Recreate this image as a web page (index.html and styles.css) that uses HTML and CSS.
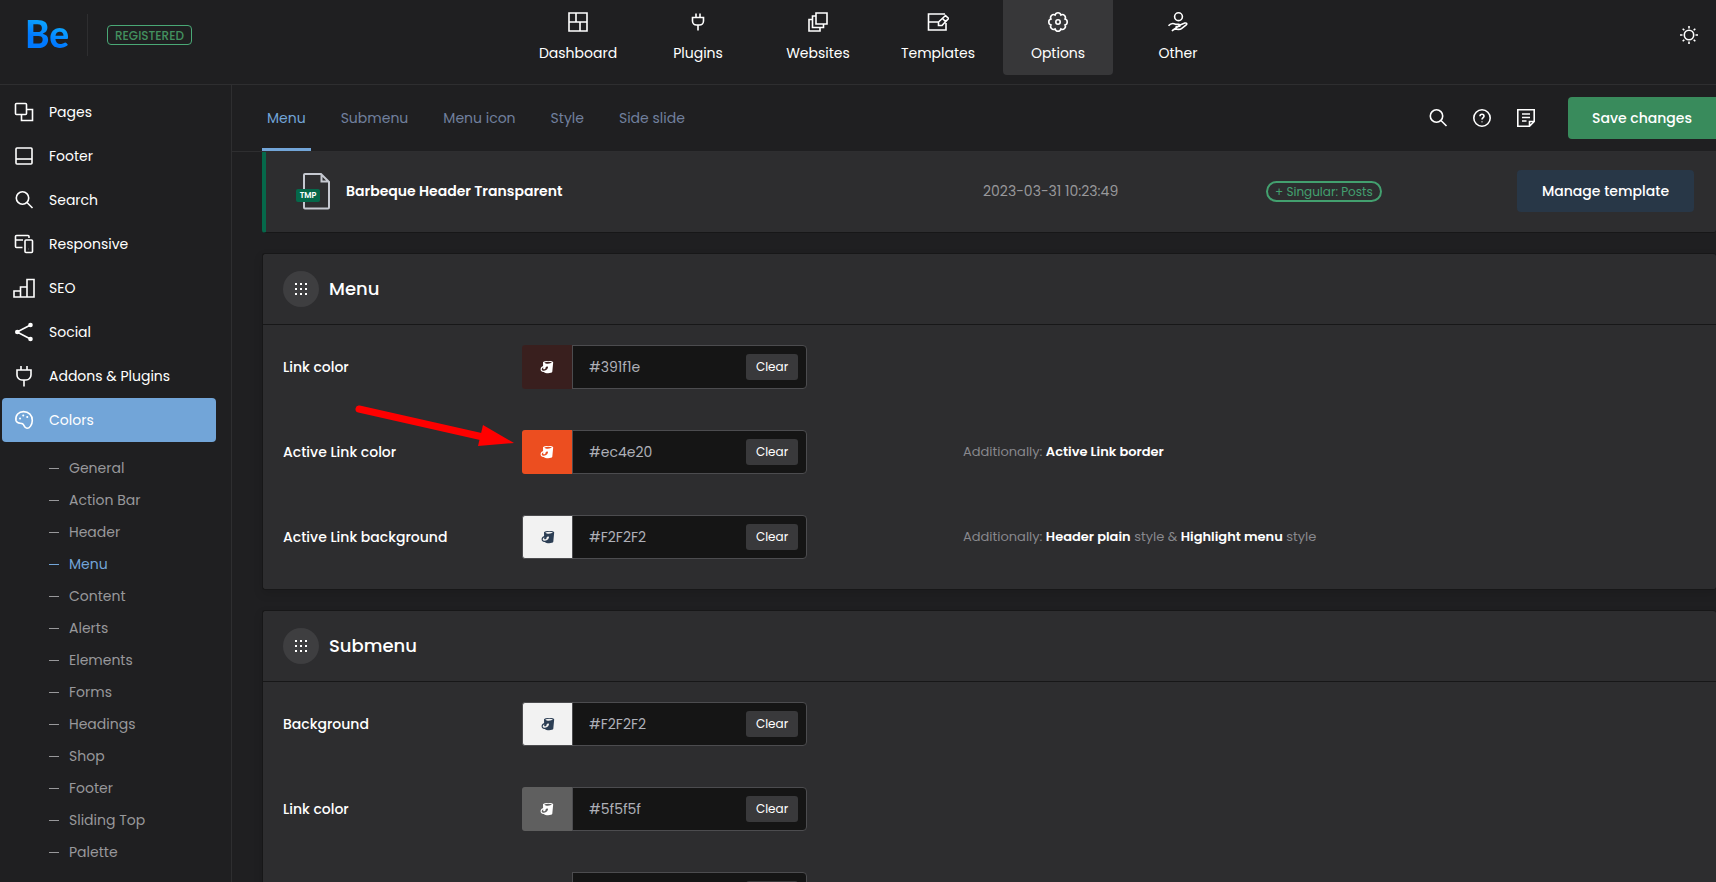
FILE: index.html
```html
<!DOCTYPE html>
<html lang="en">
<head>
<meta charset="utf-8">
<title>Theme Options</title>
<link rel="stylesheet" href="styles.css">
</head>
<body>
<svg class="sprite" aria-hidden="true">
  <symbol id="i-plug" viewBox="0 0 22 22"><path d="M8 4.500V1M14 4.500V1M4 5h14v5a5 5 0 0 1-5 5H9a5 5 0 0 1-5-5zM11 15v6.500"/></symbol>
  <symbol id="i-search" viewBox="0 0 22 22"><circle cx="9.500" cy="9" r="6.200"/><path d="M14 13.500l5.500 5.500"/></symbol>
  <symbol id="i-bucket" viewBox="0 0 14 14"><path fill-rule="evenodd" d="M3 2.300C3.500.6 12.900.4 13.200 2.200L12.300 11.800C11.800 13.700 5 13.700 3.800 12C1.800 12.200.2 10.700.6 8.700C.9 7.200 1.800 6.300 3.100 5.900ZM4.300 2.500C5.500 4.200 10.500 4.100 12 2.300C9.800 1.500 6.300 1.500 4.300 2.500ZM3.400 7.200C1.700 8 1.200 9.700 2.300 10.600C4.800 11 8 9.600 8 6.900C7.300 6.300 6 6.600 5.600 7.400C5.700 8.700 4.500 9.600 3.500 9.300C3 8.800 3.200 8 3.400 7.200Z"/></symbol>
  <symbol id="i-dots" viewBox="0 0 12 12"><path d="M0 0h2v2H0zM5 0h2v2H5zM10 0h2v2h-2zM0 5h2v2H0zM5 5h2v2H5zM10 5h2v2h-2zM0 10h2v2H0zM5 10h2v2H5zM10 10h2v2h-2z"/></symbol>
</svg>

<header class="topbar">
  <div class="brand">
    <a class="logo" href="#">Be</a>
    <span class="registered">REGISTERED</span>
  </div>
  <nav class="topnav" aria-label="Main">
    <a class="topnav-item" href="#"><svg class="icon" viewBox="0 0 22 22"><path d="M2 2h18v18H2zM2 11h18M9 2v9M13 11v9"/></svg>Dashboard</a>
    <a class="topnav-item" href="#"><svg class="icon" viewBox="0 0 22 22"><path d="M9 6V2.500M13 6V2.500M5.500 6.500h11V10a4 4 0 0 1-4 4h-3a4 4 0 0 1-4-4zM11 14v5.500"/></svg>Plugins</a>
    <a class="topnav-item" href="#"><svg class="icon" viewBox="0 0 22 22"><path d="M9 2h11v11H9zM9 5H5.500v11.500h11V13M5.500 8.500H2V20h11v-3.500"/></svg>Websites</a>
    <a class="topnav-item" href="#"><svg class="icon" viewBox="0 0 22 22"><path d="M18 3H1.500v16h17.500v-7M1.500 11H11M18.500 4.500l3 3-6.500 7h-3.500v-3.500zM15.500 7.500l3 3"/></svg>Templates</a>
    <a class="topnav-item is-active" href="#"><svg class="icon" viewBox="0 0 22 22"><path d="M18 8.100A3 3 0 0 1 18 13.900A3 3 0 0 1 13.900 18A3 3 0 0 1 8.100 18A3 3 0 0 1 4 13.900A3 3 0 0 1 4 8.100A3 3 0 0 1 8.100 4A3 3 0 0 1 13.900 4A3 3 0 0 1 18 8.100Z"/><circle cx="11" cy="11" r="2.200"/></svg>Options</a>
    <a class="topnav-item" href="#"><svg class="icon" viewBox="0 0 22 22"><circle cx="11.500" cy="5.700" r="3.900"/><path d="M1.500 14.800c2-2.400 4.500-2.800 7-1.600h3.300c1.800 0 1.800 2.300 0 2.300H8.500M12.500 14.300l5.300-2.200c1.900-.5 2.700.7 1.400 1.900l-4.700 3.600c-1.500 1.200-3.500.8-5.500.6-1.700-.2-3 .4-4 1.700z"/></svg>Other</a>
  </nav>
  <button class="icon-btn theme" type="button" aria-label="Switch theme"><svg class="icon" viewBox="0 0 22 22"><circle cx="11" cy="11" r="4.700"/><path d="M11 2v2.500M11 17.500V20M2 11h2.500M17.500 11H20M4.700 4.700l1.600 1.600M15.700 15.700l1.600 1.600M4.700 17.300l1.600-1.600M15.700 6.300l1.600-1.600"/></svg></button>
</header>

<div class="shell">
  <aside class="sidebar">
    <nav aria-label="Sections">
      <a class="side-item" href="#"><svg class="icon" viewBox="0 0 22 22"><rect x="2.500" y="2.500" width="11" height="11" rx="1"/><path d="M14 8.500h5.500v11h-11V14"/></svg>Pages</a>
      <a class="side-item" href="#"><svg class="icon" viewBox="0 0 22 22"><rect x="3" y="3" width="16" height="16" rx="1"/><path d="M3 14h16"/></svg>Footer</a>
      <a class="side-item" href="#"><svg class="icon"><use href="#i-search"/></svg>Search</a>
      <a class="side-item" href="#"><svg class="icon" viewBox="0 0 22 22"><path d="M9.500 14.500H3.500a1 1 0 0 1-1-1v-10a1 1 0 0 1 1-1h11.500a1 1 0 0 1 1 1V5M2.500 7H10"/><rect x="12" y="7" width="7.500" height="12.500" rx="1"/><path d="M15.700 16h.2"/></svg>Responsive</a>
      <a class="side-item" href="#"><svg class="icon" viewBox="0 0 22 22"><path d="M1 14h6.500v6H1zM7.500 10H14v10H7.500zM14 2.500h7V20h-7z"/></svg>SEO</a>
      <a class="side-item" href="#"><svg class="icon" viewBox="0 0 22 22"><path d="M17.500 4L4 11l13.500 7"/><g class="solid"><circle cx="17.500" cy="4" r="2.300"/><circle cx="4.300" cy="11" r="2.300"/><circle cx="17.500" cy="18" r="2.300"/></g></svg>Social</a>
      <a class="side-item" href="#"><svg class="icon"><use href="#i-plug"/></svg>Addons &amp; Plugins</a>
      <a class="side-item is-active" href="#"><svg class="icon" viewBox="0 0 22 22"><path d="M3 11.500C2 6 6 2.600 10.500 2.600C15.700 2.600 19.500 6.400 19.300 11.500C19.200 16 16.500 19.400 14 19.300C11 19 11.500 15.800 9.500 14.700C7.500 13.700 4 15 3 11.500Z"/><path class="thick" d="M7 9.500h.1M10.200 6.500h.1M14.200 8h.1"/></svg>Colors</a>
    </nav>
    <nav class="subnav" aria-label="Colors">
      <a class="subnav-item" href="#">General</a>
      <a class="subnav-item" href="#">Action Bar</a>
      <a class="subnav-item" href="#">Header</a>
      <a class="subnav-item is-active" href="#">Menu</a>
      <a class="subnav-item" href="#">Content</a>
      <a class="subnav-item" href="#">Alerts</a>
      <a class="subnav-item" href="#">Elements</a>
      <a class="subnav-item" href="#">Forms</a>
      <a class="subnav-item" href="#">Headings</a>
      <a class="subnav-item" href="#">Shop</a>
      <a class="subnav-item" href="#">Footer</a>
      <a class="subnav-item" href="#">Sliding Top</a>
      <a class="subnav-item" href="#">Palette</a>
    </nav>
  </aside>

  <main class="main">
    <div class="toolbar">
      <nav class="tabs" aria-label="Menu colors">
        <a class="tab is-active" href="#">Menu</a>
        <a class="tab" href="#">Submenu</a>
        <a class="tab" href="#">Menu icon</a>
        <a class="tab" href="#">Style</a>
        <a class="tab" href="#">Side slide</a>
      </nav>
      <div class="tools">
        <button class="icon-btn" type="button" aria-label="Search"><svg class="icon"><use href="#i-search"/></svg></button>
        <button class="icon-btn" type="button" aria-label="Help"><svg class="icon" viewBox="0 0 22 22"><circle cx="11" cy="11" r="8.200"/><path d="M9 9.200c0-2.600 4-2.600 4 0 0 1.400-2 1.500-2 3.300M11 14.500v.8"/></svg></button>
        <button class="icon-btn" type="button" aria-label="Notes"><svg class="icon" viewBox="0 0 22 22"><path d="M14.500 19.200H2.800V2.800h16.400v11.700zM14.500 19v-4.500H19M7 7h8M7 10.500h8M7 14h4.500"/></svg></button>
        <button class="save" type="button">Save changes</button>
      </div>
    </div>

    <div class="content">
      <article class="template">
        <svg class="file-icon" viewBox="0 0 36 38" aria-hidden="true">
          <path class="file-sheet" d="M9 2h16l8 8v25.500a1 1 0 0 1-1 1H9a1 1 0 0 1-1-1V3a1 1 0 0 1 1-1zM25.500 2.500v7H33"/>
          <rect class="file-tag" x="0" y="17" width="24" height="13" rx="2"/>
          <text class="file-text" x="12" y="26">TMP</text>
        </svg>
        <h3 class="template-name">Barbeque Header Transparent</h3>
        <time class="template-date">2023-03-31 10:23:49</time>
        <span class="template-scope"><span class="pill">+ Singular: Posts</span></span>
        <button class="manage" type="button">Manage template</button>
      </article>

      <section class="card">
        <header class="card-head"><span class="grip"><svg viewBox="0 0 12 12"><use href="#i-dots"/></svg></span><h2 class="card-title">Menu</h2></header>
        <div class="rows">
          <div class="row">
            <label class="row-label" for="c1">Link color</label>
            <div class="picker maroon"><button class="swatch" type="button" aria-label="Pick color"><svg><use href="#i-bucket"/></svg></button><input class="hex" id="c1" type="text" value="#391f1e"><button class="clear" type="button">Clear</button></div>
          </div>
          <div class="row">
            <label class="row-label" for="c2">Active Link color</label>
            <div class="picker orange"><button class="swatch" type="button" aria-label="Pick color"><svg><use href="#i-bucket"/></svg></button><input class="hex" id="c2" type="text" value="#ec4e20"><button class="clear" type="button">Clear</button></div>
            <p class="hint">Additionally: <b>Active Link border</b></p>
            <svg class="pointer" viewBox="0 0 162 46" aria-hidden="true"><path class="pointer-line" d="M6 6L130 34"/><path class="pointer-head" d="M130 22L161 40L125 43Z"/></svg>
          </div>
          <div class="row">
            <label class="row-label" for="c3">Active Link background</label>
            <div class="picker light"><button class="swatch" type="button" aria-label="Pick color"><svg><use href="#i-bucket"/></svg></button><input class="hex" id="c3" type="text" value="#F2F2F2"><button class="clear" type="button">Clear</button></div>
            <p class="hint">Additionally: <b>Header plain</b> style &amp; <b>Highlight menu</b> style</p>
          </div>
        </div>
      </section>

      <section class="card">
        <header class="card-head"><span class="grip"><svg viewBox="0 0 12 12"><use href="#i-dots"/></svg></span><h2 class="card-title">Submenu</h2></header>
        <div class="rows">
          <div class="row">
            <label class="row-label" for="c4">Background</label>
            <div class="picker light"><button class="swatch" type="button" aria-label="Pick color"><svg><use href="#i-bucket"/></svg></button><input class="hex" id="c4" type="text" value="#F2F2F2"><button class="clear" type="button">Clear</button></div>
          </div>
          <div class="row">
            <label class="row-label" for="c5">Link color</label>
            <div class="picker grey"><button class="swatch" type="button" aria-label="Pick color"><svg><use href="#i-bucket"/></svg></button><input class="hex" id="c5" type="text" value="#5f5f5f"><button class="clear" type="button">Clear</button></div>
          </div>
          <div class="row">
            <label class="row-label" for="c6"></label>
            <div class="picker dark"><button class="swatch" type="button" aria-label="Pick color"></button><input class="hex" id="c6" type="text" value=""><button class="clear" type="button" aria-label="Clear"></button></div>
          </div>
        </div>
      </section>
    </div>
  </main>
</div>
</body>
</html>
```
FILE: styles.css
```css
:root {
  --bg: #1f1f21;
  --panel: #2d2d2f;
  --line: #2e2e30;
  --edge: #171718;
  --blue: #72a5d8;
}

* { box-sizing: border-box; }

body {
  margin: 0;
  height: 100vh;
  display: flex;
  flex-direction: column;
  overflow: hidden;
  background: var(--bg);
  color: #fff;
  font: 14px/20px Poppins, Inter, "Open Sans", sans-serif;
}

a { color: inherit; text-decoration: none; }
button, input { font: inherit; color: inherit; }
button { border: 0; padding: 0; background: none; cursor: pointer; }
h2, h3, p { margin: 0; }
.sprite { position: absolute; width: 0; height: 0; }

.icon {
  flex: none;
  width: 22px;
  height: 22px;
  fill: none;
  stroke: currentColor;
  stroke-width: 1.6;
}
.icon .solid { fill: currentColor; stroke: none; }
.icon .thick { stroke-width: 2; stroke-linecap: round; }

/* Top bar */
.topbar {
  flex: none;
  display: grid;
  grid-template-columns: 1fr auto 1fr;
  height: 85px;
  padding: 0 16px 0 25px;
  border-bottom: 1px solid var(--line);
}
.brand {
  display: flex;
  align-items: center;
  align-self: start;
  height: 42px;
  margin-top: 14px;
}
.logo {
  width: 63px;
  height: 42px;
  border-right: 1px solid var(--line);
  background: linear-gradient(20deg, #0079ff 35%, #10b4ff 75%) text;
  color: transparent;
  font: 900 37px/40px Lato, sans-serif;
}
.registered {
  height: 20px;
  margin-left: 19px;
  padding: 0 7px;
  border: 1px solid #4aa876;
  border-radius: 4px;
  color: #43905f;
  font-size: 12px;
  font-weight: 500;
  line-height: 20px;
}
.topnav {
  display: flex;
  gap: 10px;
  margin-left: 31px;
}
.topnav-item {
  display: flex;
  flex-direction: column;
  align-items: center;
  gap: 10px;
  width: 110px;
  height: 75px;
  padding-top: 11px;
  border-radius: 0 0 4px 4px;
}
.topnav-item.is-active { background: #373739; }
.icon-btn { display: flex; }
.theme { justify-self: end; align-self: start; margin-top: 24px; }

/* Sidebar */
.shell {
  flex: 1;
  min-height: 0;
  display: flex;
}
.sidebar {
  flex: none;
  width: 232px;
  padding: 5px 15px 0 2px;
  border-right: 1px solid var(--line);
  overflow: hidden;
}
.side-item {
  display: flex;
  align-items: center;
  gap: 14px;
  height: 44px;
  padding-left: 11px;
  border-radius: 4px;
}
.side-item.is-active { background: var(--blue); }
.subnav { padding: 10px 0 0 47px; }
.subnav-item {
  display: flex;
  align-items: center;
  gap: 10px;
  height: 32px;
  color: #98989b;
}
.subnav-item::before {
  content: "";
  width: 10px;
  height: 1px;
  background: currentColor;
}
.subnav-item.is-active { color: var(--blue); }

/* Toolbar */
.main {
  flex: 1;
  min-width: 0;
  display: flex;
  flex-direction: column;
}
.toolbar {
  flex: none;
  display: flex;
  justify-content: space-between;
  height: 66px;
  padding-left: 30px;
}
.tabs { display: flex; gap: 25px; }
.tab {
  padding: 23px 5px 0;
  border-bottom: 3px solid transparent;
  color: #71809e;
}
.tab.is-active {
  border-color: var(--blue);
  border-radius: 2px 2px 0 0;
  color: var(--blue);
}
.tools { display: flex; align-items: center; gap: 22px; }
.save {
  width: 148px;
  height: 42px;
  margin-left: 9px;
  border-radius: 4px 0 0 4px;
  background: #398b5c;
  font-weight: 500;
}

/* Content */
.content {
  flex: 1;
  min-height: 0;
  display: flex;
  flex-direction: column;
  gap: 20px;
  padding-left: 30px;
  overflow: hidden;
  border-top: 1px solid var(--line);
}
.template {
  flex: none;
  display: grid;
  grid-template-columns: 50px 637fr 283fr 251fr 177px;
  align-items: center;
  height: 81px;
  padding: 0 22px 2px 30px;
  border-left: 4px solid #05684a;
  border-bottom: 1px solid var(--edge);
  border-radius: 0 0 3px 3px;
  background: var(--panel);
}
.file-icon { width: 36px; height: 38px; }
.file-sheet { fill: none; stroke: #c5c8d0; stroke-width: 2; }
.file-tag { fill: #05684a; }
.file-text { fill: #fff; font-size: 8px; font-weight: 600; text-anchor: middle; }
.template-name { font-size: 14px; font-weight: 600; line-height: 20px; }
.template-date { color: #98989b; }
.pill {
  display: inline-block;
  height: 21px;
  padding: 0 7px;
  border: 2px solid #43a06f;
  border-radius: 11px;
  color: #43a06f;
  font-size: 12px;
  line-height: 18px;
}
.manage {
  height: 42px;
  border-radius: 4px;
  background: #283747;
  font-weight: 500;
}
.card {
  flex: none;
  border: 1px solid var(--edge);
  border-right: 0;
  border-radius: 3px;
  background: var(--panel);
  box-shadow: 0 4px 10px rgba(0, 0, 0, 0.12);
}
.card-head {
  display: flex;
  align-items: center;
  gap: 10px;
  height: 71px;
  padding-left: 20px;
  border-bottom: 1px solid var(--edge);
}
.grip {
  display: grid;
  place-items: center;
  width: 36px;
  height: 36px;
  border-radius: 50%;
  background: #3e3e40;
}
.grip svg { width: 12px; height: 12px; fill: #fff; }
.card-title { font-size: 18px; font-weight: 500; line-height: 24px; }
.rows {
  display: flex;
  flex-direction: column;
  gap: 1px;
  padding-bottom: 10px;
}
.row {
  position: relative;
  display: grid;
  grid-template-columns: 239px 441px 1fr;
  align-items: center;
  padding: 20px;
}
.row-label { font-weight: 500; }
.picker {
  display: flex;
  align-items: center;
  width: 285px;
  height: 44px;
  border: 1px solid #4c4c4f;
  border-radius: 4px;
  background: #151515;
}
.swatch {
  display: grid;
  place-items: center;
  align-self: stretch;
  flex: none;
  width: 51px;
  margin: -1px 0 -1px -1px;
  border-right: 1px solid #4c4c4f;
  border-radius: 3px 0 0 3px;
}
.swatch svg { width: 14px; height: 14px; fill: #fff; }
.maroon .swatch { background: #391f1e; }
.orange .swatch { background: #ec4e20; }
.light .swatch {
  border: 1px solid #4c4c4f;
  background: #f2f2f2;
}
.light .swatch svg { fill: #2c3e54; }
.grey .swatch { background: #5f5f5f; }
.dark .swatch { background: var(--panel); }
.hex {
  flex: 1;
  min-width: 0;
  height: 40px;
  padding: 0 0 0 16px;
  border: 0;
  outline: 0;
  background: none;
  color: #aeb0b8;
}
.clear {
  width: 52px;
  height: 26px;
  margin-right: 8px;
  border-radius: 3px;
  background: #39393b;
  font-size: 12px;
}
.hint { color: #88888d; font-size: 13px; }
.hint b { color: #fff; font-weight: 600; }
.pointer {
  position: absolute;
  top: -7px;
  left: 90px;
  width: 162px;
  height: 46px;
}
.pointer-line { fill: none; stroke: #f00; stroke-width: 7; stroke-linecap: round; }
.pointer-head { fill: #f00; }
```
